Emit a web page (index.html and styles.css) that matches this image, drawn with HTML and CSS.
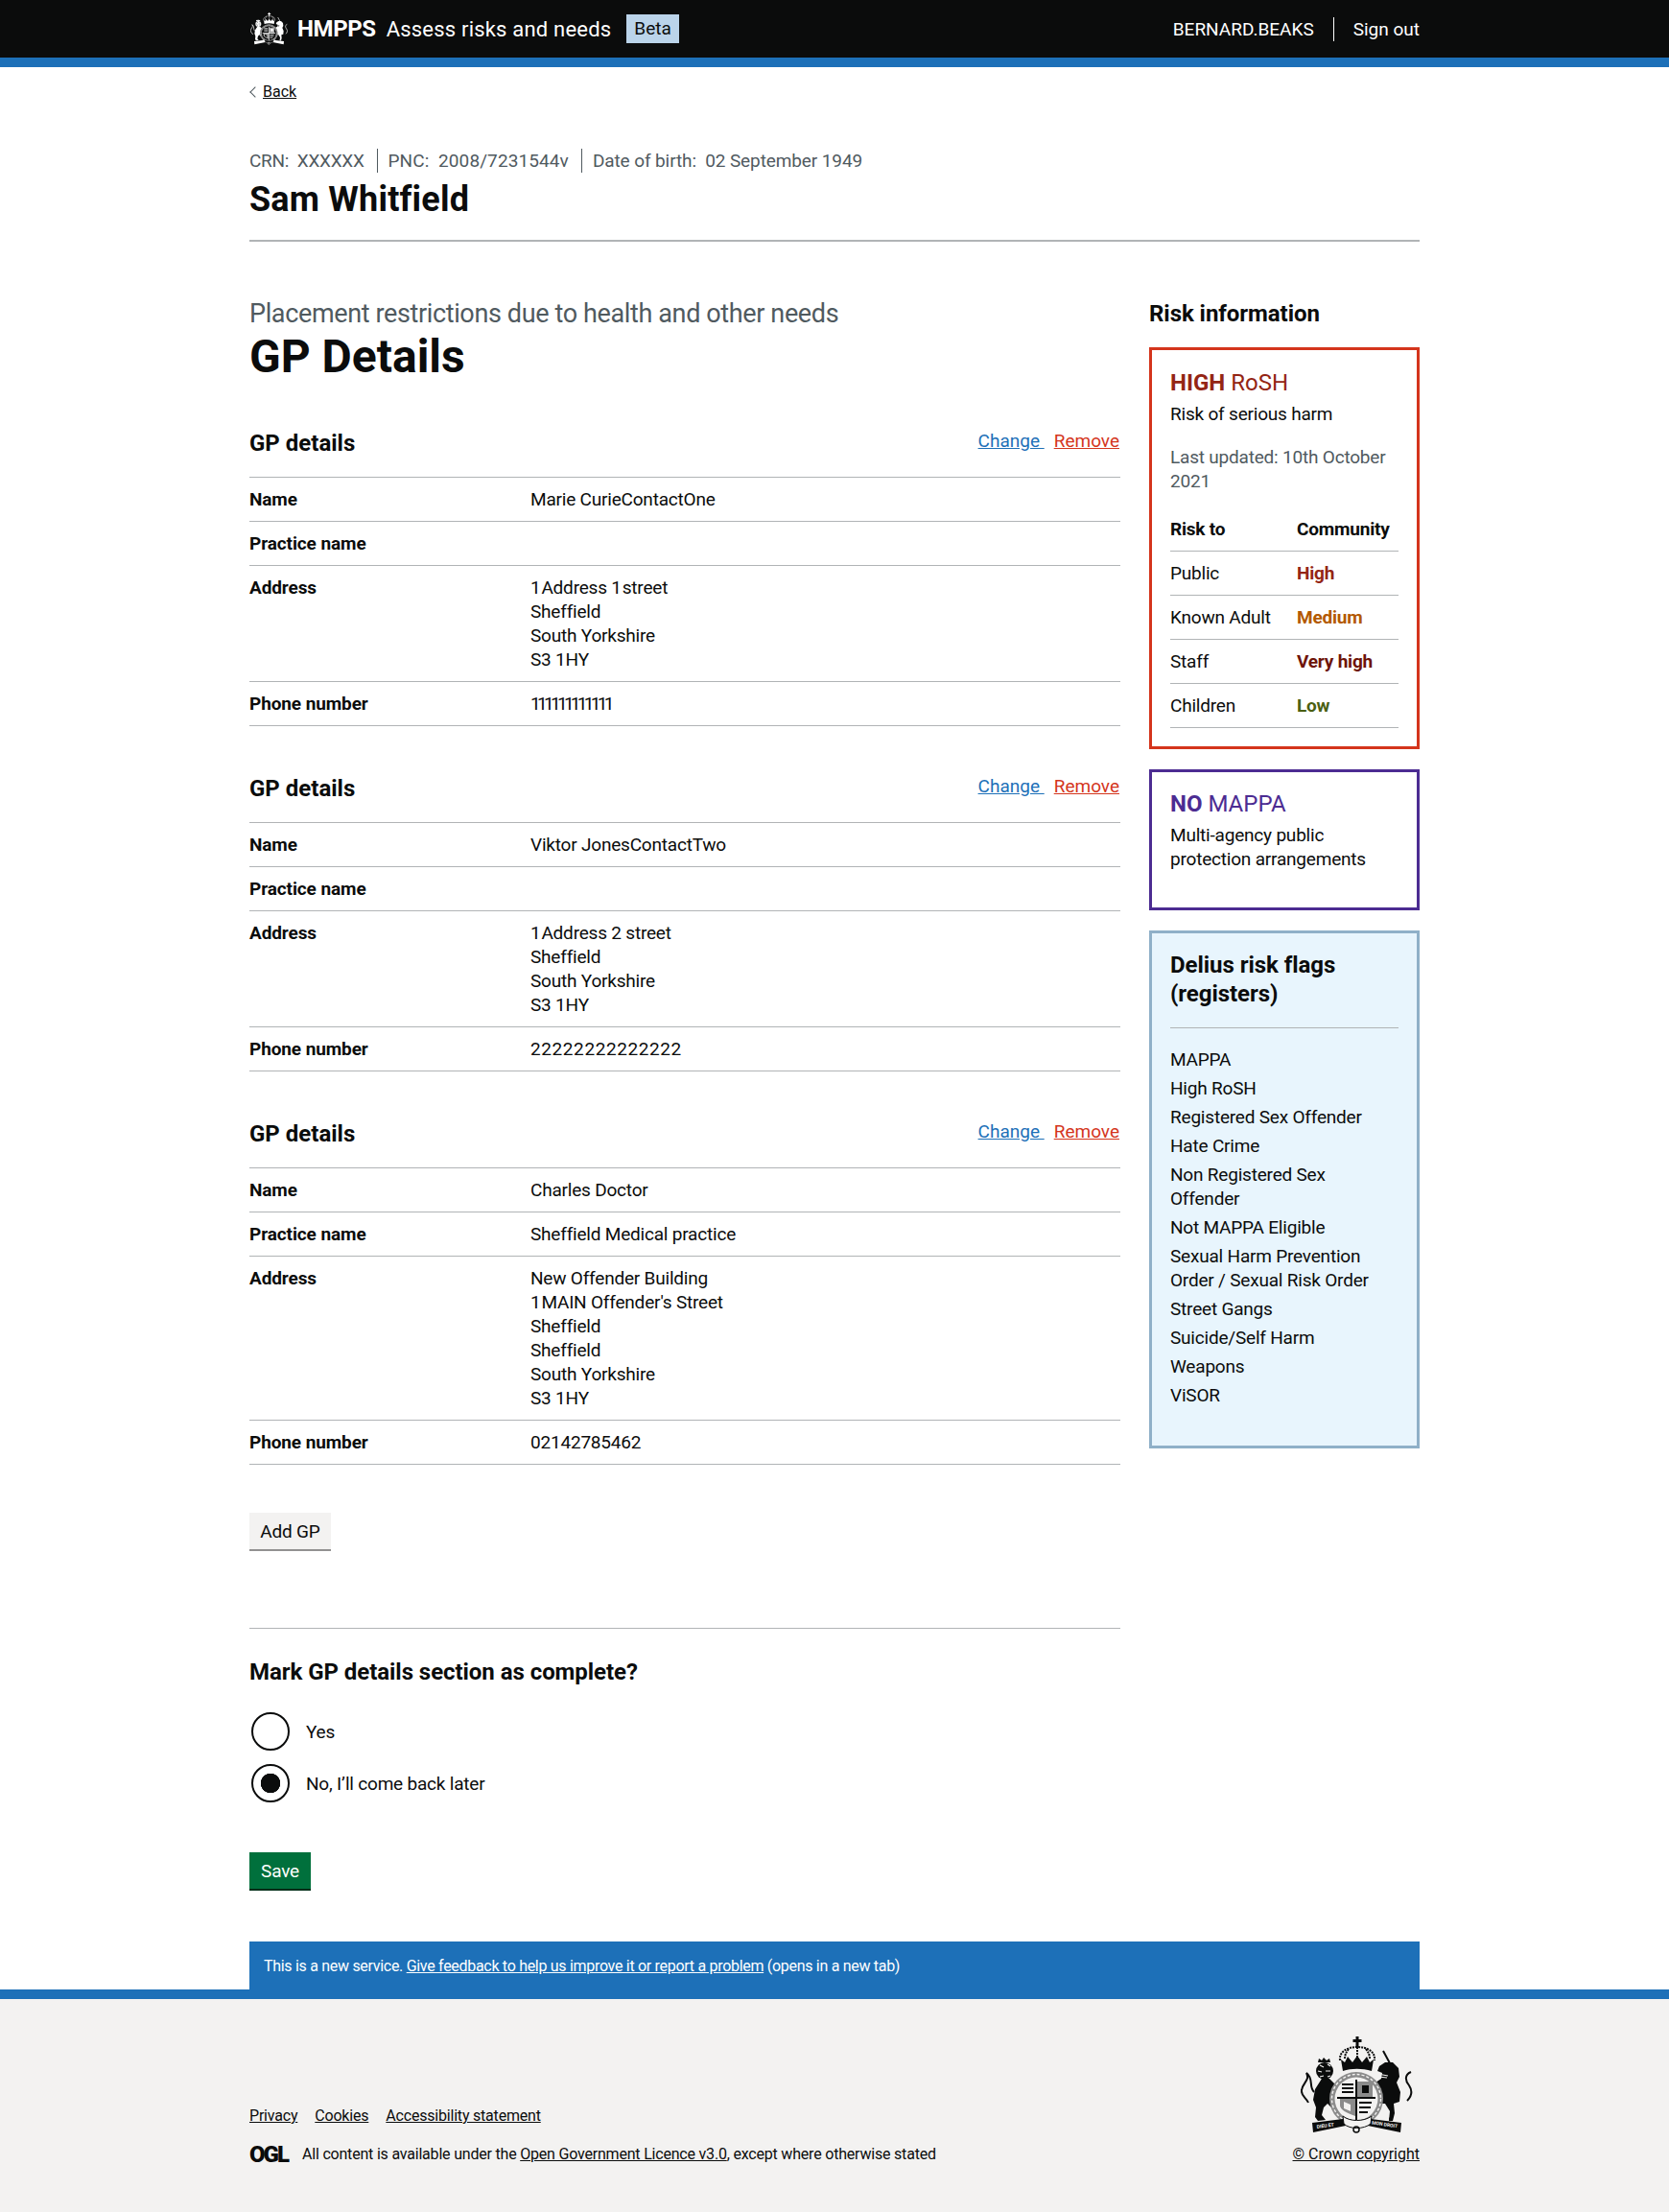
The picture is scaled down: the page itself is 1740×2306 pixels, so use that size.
FILE: index.html
```html
<!DOCTYPE html>
<html lang="en">
<head>
  <meta charset="UTF-8">
  <title>GP Details - Assess risks and needs</title>
  <link rel="stylesheet" href="styles.css">
</head>
<body>
  <svg class="defs" width="0" height="0" aria-hidden="true">
    <symbol id="crest" viewBox="0 0 117 102">
      <!-- crown -->
      <path class="ink" d="M57.5 0h3v3h3v3h-3v5h-3V6h-3V3h3z"/>
      <path class="line" d="M41 25C40 16 48 11 59 11s19 5 18 14M59 11v12M50 13c-3 4-4 7-4 10M68 13c3 4 4 7 4 10"/>
      <path class="ink" d="M42 24l4 3 3-6 5 6 5-7 5 7 5-6 3 6 4-3-2 12c-10-3-21-3-30 0z"/>
      <!-- lion -->
      <path class="ink" d="M22 44h8l8 8 7 3v3l-8-1-5-2 1 7 5 8 6 4-2 4-8-2-6-6-4 4-2 8 4 5-8 1-3-4 1-10-3-8 2-11z"/>
      <circle class="ink" cx="25" cy="36" r="9"/>
      <path class="line-paper" d="M20 30l4 2M28 29l3 2M18 36l4 1M26 36l5 0M20 42l4-1M28 42l3-1"/>
      <path class="ink" d="M18 27l1-4 3 2 2-3 3 3 3-2 1 4z"/>
      <path class="tail" d="M14 58C8 52 14 44 6 38 10 46 2 48 1 56c-1 6 5 8 7 13"/>
      <!-- unicorn -->
      <path class="ink" d="M88 27h8l6 6 1 9-3 6 4 10-1 10-6 2 1 10-2 8h-4l1-10-5-8h-8l-8 8-4-2 8-9-2-7-2-6 6-6 6-4 1-6-5-2 2-5z"/>
      <path class="tail" d="M86 15l7 13M115 37c-7 3-6 9-2 14 4 6 3 11-2 16"/>
      <path class="line-paper" d="M80 39l11 2M81 42l9 1"/>
      <path class="chain" d="M95 70v14"/>
      <circle class="ink" cx="94" cy="86" r="2"/>
      <!-- shield and garter -->
      <circle class="grey" cx="58" cy="65" r="28"/>
      <circle class="garter" cx="58" cy="65" r="25.5"/>
      <circle class="paper" cx="58" cy="65" r="22.5"/>
      <path class="grey" d="M59 47h16v16H59zM41 65h16v18c-9-3-16-7-16-11z"/>
      <path class="ink" d="M64 51h7v8h-7z"/>
      <path class="stripes" d="M43 50h12M43 54h12M43 58h12M61 69h13M61 74h12M61 79h9"/>
      <path class="paper" d="M45 68l7 3v7l-7-3z"/>
      <path class="ink" d="M57 45h2v42h-2zM38 63h40v2H38z"/>
      <!-- motto ribbons -->
      <path class="ink" d="M12 90l32-4 3 7-34 7zM105 90l-32-4-3 7 34 7z"/>
      <path class="paper-stroke" d="M44 83c7 6 22 6 30 0l-1 8c-7 6-22 6-28 0z"/>
      <circle class="ring" cx="58" cy="97" r="3"/>
    </symbol>
  </svg>

  <header class="site-header">
    <div class="wrap header-inner">
      <div class="brand">
        <svg class="brand-crest"><use href="#crest"/></svg>
        <span class="brand-org">HMPPS</span>
        <span class="brand-service">Assess risks and needs</span>
        <span class="beta">Beta</span>
      </div>
      <div class="user-nav">
        <span class="user-name">BERNARD.BEAKS</span>
        <a class="sign-out" href="#">Sign out</a>
      </div>
    </div>
  </header>

  <div class="wrap">
    <div class="back-row"><span class="chevron"></span><a class="back" href="#">Back</a></div>

    <div class="offender-meta">
      <span class="meta-item">CRN:&nbsp; XXXXXX</span>
      <span class="meta-item">PNC:&nbsp; 2008/7231544v</span>
      <span class="meta-item">Date of birth:&nbsp; 02 September 1949</span>
    </div>
    <div class="offender-name">Sam Whitfield</div>
    <hr class="rule-top">

    <div class="columns">
      <main class="main-col">
        <div class="caption">Placement restrictions due to health and other needs</div>
        <h1>GP Details</h1>

        <section class="gp">
          <div class="gp-head">
            <h2>GP details</h2>
            <div class="gp-actions"><a class="change" href="#">Change&nbsp;</a><a class="remove" href="#">Remove</a></div>
          </div>
          <div class="row"><div class="key">Name</div><div class="value">Marie CurieContactOne</div></div>
          <div class="row"><div class="key">Practice name</div><div class="value"></div></div>
          <div class="row"><div class="key">Address</div><div class="value"><span class="tight">1 </span>Address <span class="tight">1 </span>street<br>Sheffield<br>South Yorkshire<br>S3 1HY</div></div>
          <div class="row"><div class="key">Phone number</div><div class="value ones">111111111111</div></div>
        </section>

        <section class="gp">
          <div class="gp-head">
            <h2>GP details</h2>
            <div class="gp-actions"><a class="change" href="#">Change&nbsp;</a><a class="remove" href="#">Remove</a></div>
          </div>
          <div class="row"><div class="key">Name</div><div class="value">Viktor JonesContactTwo</div></div>
          <div class="row"><div class="key">Practice name</div><div class="value"></div></div>
          <div class="row"><div class="key">Address</div><div class="value"><span class="tight">1 </span>Address 2 street<br>Sheffield<br>South Yorkshire<br>S3 1HY</div></div>
          <div class="row"><div class="key">Phone number</div><div class="value twos">22222222222222</div></div>
        </section>

        <section class="gp">
          <div class="gp-head">
            <h2>GP details</h2>
            <div class="gp-actions"><a class="change" href="#">Change&nbsp;</a><a class="remove" href="#">Remove</a></div>
          </div>
          <div class="row"><div class="key">Name</div><div class="value">Charles Doctor</div></div>
          <div class="row"><div class="key">Practice name</div><div class="value">Sheffield Medical practice</div></div>
          <div class="row"><div class="key">Address</div><div class="value">New Offender Building<br><span class="tight">1 </span>MAIN Offender's Street<br>Sheffield<br>Sheffield<br>South Yorkshire<br>S3 1HY</div></div>
          <div class="row"><div class="key">Phone number</div><div class="value">02142785462</div></div>
        </section>

        <button class="btn-add" type="button">Add GP</button>
        <hr class="rule-mid">

        <h3 class="complete-q">Mark GP details section as complete?</h3>
        <label class="radio"><input type="radio" name="complete"> Yes</label>
        <label class="radio"><input type="radio" name="complete" checked> No, I’ll come back later</label>
        <button class="btn-save" type="button">Save</button>
      </main>

      <aside class="side-col">
        <h2 class="side-title">Risk information</h2>

        <div class="box box-rosh">
          <div class="box-title"><strong>HIGH</strong> RoSH</div>
          <p class="box-desc">Risk of serious harm</p>
          <p class="updated">Last updated: 10th October 2021</p>
          <div class="risk-table">
            <div class="risk-row risk-head"><span>Risk to</span><span>Community</span></div>
            <div class="risk-row"><span>Public</span><span class="lvl-high">High</span></div>
            <div class="risk-row"><span>Known Adult</span><span class="lvl-medium">Medium</span></div>
            <div class="risk-row"><span>Staff</span><span class="lvl-vhigh">Very high</span></div>
            <div class="risk-row"><span>Children</span><span class="lvl-low">Low</span></div>
          </div>
        </div>

        <div class="box box-mappa">
          <div class="box-title"><strong>NO</strong> MAPPA</div>
          <p class="box-desc">Multi-agency public protection arrangements</p>
        </div>

        <div class="box box-flags">
          <h3>Delius risk flags (registers)</h3>
          <ul class="flags">
            <li>MAPPA</li>
            <li>High RoSH</li>
            <li>Registered Sex Offender</li>
            <li>Hate Crime</li>
            <li>Non Registered Sex Offender</li>
            <li>Not MAPPA Eligible</li>
            <li>Sexual Harm Prevention Order / Sexual Risk Order</li>
            <li>Street Gangs</li>
            <li>Suicide/Self Harm</li>
            <li>Weapons</li>
            <li>ViSOR</li>
          </ul>
        </div>
      </aside>
    </div>

    <div class="feedback">This is a new service. <a href="#">Give feedback to help us improve it or report a problem</a> (opens in a new tab)</div>
  </div>

  <footer class="site-footer">
    <div class="wrap footer-inner">
      <div class="footer-left">
        <div class="footer-links">
          <a href="#">Privacy</a>
          <a href="#">Cookies</a>
          <a href="#">Accessibility statement</a>
        </div>
        <div class="licence">
          <span class="ogl">OGL</span>
          <span>All content is available under the <a href="#">Open Government Licence v3.0</a>, except where otherwise stated</span>
        </div>
      </div>
      <div class="footer-right">
        <svg class="footer-crest" viewBox="0 0 117 102">
          <use href="#crest" width="117" height="102"/>
          <text class="motto" transform="translate(17 96) rotate(-8)">DIEU ET</text>
          <text class="motto" transform="translate(74 91.5) rotate(8)">MON DROIT</text>
        </svg>
        <a class="copyright" href="#">© Crown copyright</a>
      </div>
    </div>
  </footer>
</body>
</html>
```

FILE: styles.css
```css
body {
  margin: 0;
  font-family: Roboto, Arial, sans-serif;
  font-size: 19px;
  line-height: 25px;
  letter-spacing: -0.2px;
  color: #0b0c0c;
  background: white;
}
a { color: inherit; }
h1, h2, h3, p { margin: 0; }
.defs { position: absolute; }
.wrap {
  width: 1220px;
  margin: 0 auto;
}

/* crest parts */
.ink { fill: currentColor; }
.paper { fill: var(--paper); }
.grey { fill: var(--grey); }
.line { fill: none; stroke: currentColor; stroke-width: 2; stroke-dasharray: 2 1; }
.line-paper { fill: none; stroke: var(--paper); stroke-width: 1.2; }
.tail { fill: none; stroke: currentColor; stroke-width: 2; }
.chain { fill: none; stroke: currentColor; stroke-width: 1.2; stroke-dasharray: 2 1; }
.garter { fill: none; stroke: var(--paper); stroke-width: 1.4; stroke-dasharray: 3 2; }
.stripes { fill: none; stroke: currentColor; stroke-width: 2; }
.ring { fill: none; stroke: currentColor; stroke-width: 1.5; }
.paper-stroke { fill: var(--paper); stroke: currentColor; stroke-width: 1; }
.motto {
  fill: #f3f2f1;
  font-size: 5px;
  font-weight: 700;
  letter-spacing: 0;
}

/* header */
.site-header {
  height: 60px;
  background: #0b0c0c;
  border-bottom: 10px solid #1d70b8;
  color: white;
}
.header-inner {
  height: 60px;
  display: flex;
  justify-content: space-between;
  align-items: center;
}
.brand {
  display: flex;
  align-items: center;
}
.brand-crest {
  width: 39px;
  height: 34px;
  margin-left: 1px;
  margin-right: 10px;
  color: #fff;
  --paper: #0b0c0c;
  --grey: #a8a8a8;
}
.brand-org {
  font-size: 24px;
  font-weight: 700;
  letter-spacing: -0.4px;
  margin-right: 11px;
}
.brand-service {
  font-size: 22px;
  letter-spacing: 0.2px;
  margin-right: 16px;
}
.beta {
  background: #bbd4ea;
  color: #0b0c0c;
  letter-spacing: 0;
  line-height: 30px;
  padding: 0 8px;
}
.user-nav {
  display: flex;
  align-items: center;
  letter-spacing: 0;
}
.user-name {
  padding-right: 20px;
  border-right: 1px solid white;
}
.sign-out {
  margin-left: 20px;
  text-decoration: none;
}

/* person */
.back-row {
  display: flex;
  align-items: center;
  padding-top: 13px;
  height: 25px;
  font-size: 16px;
  letter-spacing: 0;
}
.chevron {
  width: 7px;
  height: 7px;
  margin: 0 4px 0 2px;
  border-left: 1px solid #505a5f;
  border-bottom: 1px solid #505a5f;
  transform: rotate(45deg);
}
.offender-meta {
  display: flex;
  margin-top: 47px;
  color: #505a5f;
  letter-spacing: 0.1px;
}
.meta-item {
  padding-right: 13px;
  margin-right: 11px;
  border-right: 1px solid #505a5f;
}
.meta-item:first-child { letter-spacing: -0.3px; }
.meta-item:last-child { border-right: none; letter-spacing: -0.1px; }
.offender-name {
  margin-top: 8px;
  font-size: 36px;
  line-height: 40px;
  font-weight: 700;
  letter-spacing: 0.2px;
}
.rule-top {
  margin: 22px 0 0;
  border: none;
  border-top: 2px solid #b1b4b6;
}

/* columns */
.columns {
  display: flex;
  gap: 30px;
}
.main-col { width: 908px; }
.side-col { width: 282px; }
.caption {
  margin-top: 60px;
  font-size: 27px;
  line-height: 30px;
  letter-spacing: -0.37px;
  color: #505a5f;
}
h1 {
  margin-top: 5px;
  font-size: 48px;
  line-height: 50px;
  letter-spacing: 0;
}

/* gp cards */
.gp { margin-top: 49px; }
.gp-head {
  display: flex;
  justify-content: space-between;
  margin-bottom: 20px;
  padding-top: 1px;
}
.gp-head h2 {
  font-size: 24px;
  line-height: 30px;
  letter-spacing: 0;
}
.gp-actions {
  display: flex;
  gap: 10px;
  margin-right: 1px;
  line-height: 25px;
  letter-spacing: 0;
}
.change { color: #1d70b8; }
.remove { color: #d4351c; }
.row {
  display: grid;
  grid-template-columns: 293px 1fr;
  padding: 10px 0;
  border-top: 1px solid #b1b4b6;
}
.row:last-child { border-bottom: 1px solid #b1b4b6; }
.key { font-weight: 700; letter-spacing: -0.1px; }
.tight { letter-spacing: -2px; }
.ones { letter-spacing: -3.7px; }
.twos { letter-spacing: 0.6px; }

/* lower form */
.btn-add, .btn-save {
  display: block;
  border: none;
  font-family: inherit;
  font-size: 19px;
  line-height: 25px;
  height: 38px;
  letter-spacing: -0.2px;
  cursor: pointer;
}
.btn-add {
  width: 85px;
  margin-top: 50px;
  background: #f3f2f1;
  color: #0b0c0c;
  box-shadow: 0 2px 0 #929191;
}
.rule-mid {
  margin: 82px 0 0;
  border: none;
  border-top: 1px solid #b1b4b6;
}
.complete-q {
  margin-top: 30px;
  margin-bottom: 27px;
  font-size: 24px;
  line-height: 30px;
  letter-spacing: -0.05px;
}
.radio {
  display: flex;
  align-items: center;
  gap: 17px;
  margin-bottom: 14px;
}
.radio input {
  appearance: none;
  width: 40px;
  height: 40px;
  margin: 0 0 0 2px;
  border: 2px solid #0b0c0c;
  border-radius: 50%;
  background: white;
}
.radio input:checked {
  background: radial-gradient(circle, #0b0c0c 0 10px, white 10.5px);
}
.btn-save {
  width: 64px;
  margin-top: 52px;
  background: #00703c;
  color: white;
  box-shadow: 0 2px 0 #002d18;
}

/* right column */
.side-title {
  margin-top: 60px;
  margin-bottom: 20px;
  font-size: 24px;
  line-height: 30px;
  letter-spacing: -0.05px;
}
.box {
  padding: 19px 19px;
  border: 3px solid;
  margin-bottom: 21px;
}
.box-rosh { border-color: #d4351c; }
.box-mappa {
  border-color: #4c2c92;
  padding-top: 18px;
  padding-bottom: 38px;
}
.box-flags {
  border-color: #8fb0c8;
  background: #e8f5fd;
  padding-top: 18px;
  padding-bottom: 40px;
}
.box-title {
  font-size: 24px;
  line-height: 30px;
  letter-spacing: 0;
}
.box-rosh .box-title { color: #942514; }
.box-mappa .box-title { color: #4c2c92; }
.box-desc { margin-top: 5px; }
.updated {
  margin-top: 20px;
  color: #505a5f;
}
.risk-table { margin-top: 15px; }
.risk-row {
  display: grid;
  grid-template-columns: 132px 1fr;
  padding: 10px 0;
  border-bottom: 1px solid #b1b4b6;
}
.risk-head { font-weight: 700; }
.risk-row span + span { font-weight: 700; }
.lvl-high { color: #942514; }
.lvl-medium { color: #b35900; }
.lvl-vhigh { color: #6e1409; }
.lvl-low { color: #4b5f12; }
.box-flags h3 {
  font-size: 24px;
  line-height: 30px;
  letter-spacing: -0.05px;
  padding-bottom: 20px;
  border-bottom: 1px solid #b1b4b6;
}
.flags {
  list-style: none;
  margin: 20px 0 0;
  padding: 0;
}
.flags li { margin-bottom: 5px; }
.flags li:last-child { margin-bottom: 0; }

/* feedback and footer */
.feedback {
  margin-top: 55px;
  height: 50px;
  padding: 13px 15px 0;
  box-sizing: border-box;
  background: #1d70b8;
  color: white;
  font-size: 16px;
  line-height: 25px;
  letter-spacing: -0.3px;
}
.site-footer {
  height: 222px;
  background: #f3f2f1;
  border-top: 10px solid #1d70b8;
  font-size: 16px;
  line-height: 20px;
}
.footer-inner {
  height: 222px;
  display: flex;
  justify-content: space-between;
  align-items: flex-end;
  padding-bottom: 50px;
  box-sizing: border-box;
}
.footer-links {
  display: flex;
  gap: 18px;
  margin-bottom: 20px;
}
.licence {
  display: flex;
  align-items: center;
  gap: 14px;
}
.ogl {
  width: 41px;
  font-size: 24px;
  font-weight: 900;
  letter-spacing: -2px;
}
.footer-right {
  display: flex;
  flex-direction: column;
  align-items: flex-end;
  gap: 11px;
}
.copyright { letter-spacing: 0; }
.footer-crest {
  width: 117px;
  height: 102px;
  margin-right: 7px;
  color: #0b0c0c;
  --paper: #f3f2f1;
  --grey: #8b8b8b;
}
```
